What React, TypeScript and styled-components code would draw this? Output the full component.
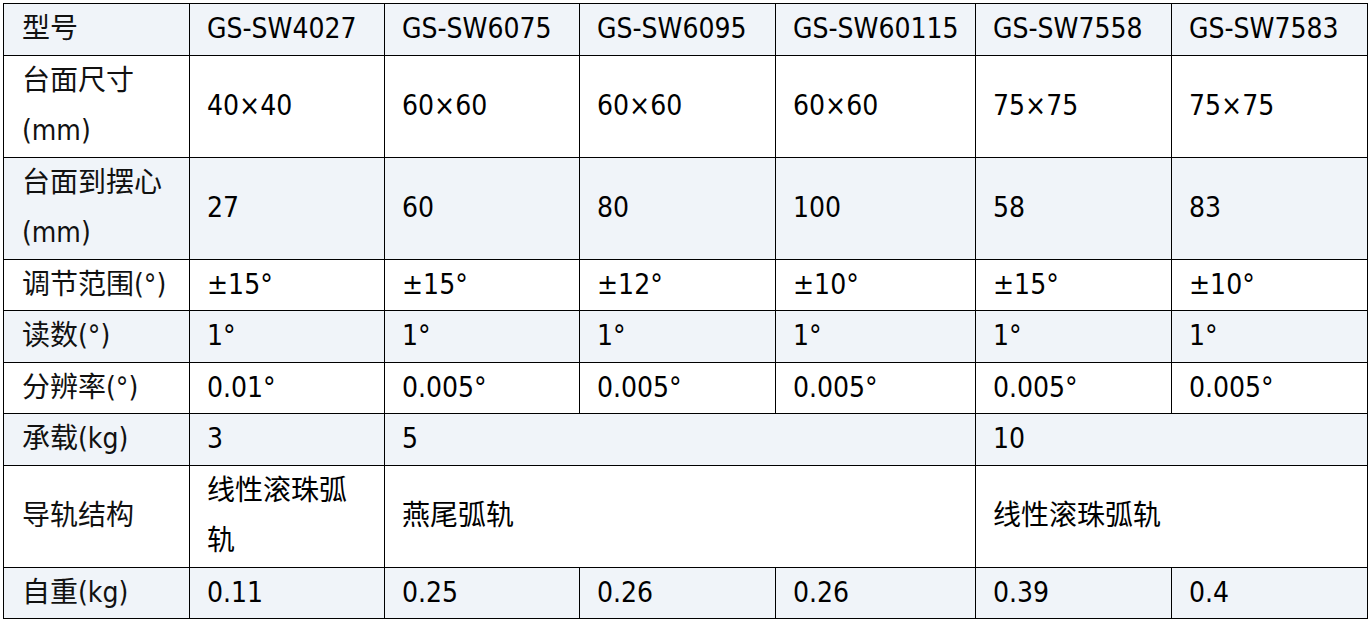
import styled, { createGlobalStyle } from 'styled-components';

const GlobalStyle = createGlobalStyle`
  html, body {
    margin: 0;
    padding: 0;
    background: #ffffff;
  }
  body {
    font-family: 'DejaVu Sans Condensed', 'DejaVu Sans', 'Noto Sans CJK SC', sans-serif;
    color: #000;
  }
`;

const widths = [186, 195, 195, 196, 200, 196, 196];

type Cell = { text: string; span?: number };
type Row = { label: string; cells: Cell[]; nowrap?: boolean };

const rows: Row[] = [
  {
    label: '型号',
    nowrap: true,
    cells: [
      { text: 'GS-SW4027' },
      { text: 'GS-SW6075' },
      { text: 'GS-SW6095' },
      { text: 'GS-SW60115' },
      { text: 'GS-SW7558' },
      { text: 'GS-SW7583' },
    ],
  },
  {
    label: '台面尺寸(mm)',
    cells: [
      { text: '40×40' },
      { text: '60×60' },
      { text: '60×60' },
      { text: '60×60' },
      { text: '75×75' },
      { text: '75×75' },
    ],
  },
  {
    label: '台面到摆心(mm)',
    cells: [
      { text: '27' },
      { text: '60' },
      { text: '80' },
      { text: '100' },
      { text: '58' },
      { text: '83' },
    ],
  },
  {
    label: '调节范围(°)',
    cells: [
      { text: '±15°' },
      { text: '±15°' },
      { text: '±12°' },
      { text: '±10°' },
      { text: '±15°' },
      { text: '±10°' },
    ],
  },
  {
    label: '读数(°)',
    cells: [
      { text: '1°' },
      { text: '1°' },
      { text: '1°' },
      { text: '1°' },
      { text: '1°' },
      { text: '1°' },
    ],
  },
  {
    label: '分辨率(°)',
    cells: [
      { text: '0.01°' },
      { text: '0.005°' },
      { text: '0.005°' },
      { text: '0.005°' },
      { text: '0.005°' },
      { text: '0.005°' },
    ],
  },
  {
    label: '承载(kg)',
    cells: [{ text: '3' }, { text: '5', span: 3 }, { text: '10', span: 2 }],
  },
  {
    label: '导轨结构',
    cells: [
      { text: '线性滚珠弧轨' },
      { text: '燕尾弧轨', span: 3 },
      { text: '线性滚珠弧轨', span: 2 },
    ],
  },
  {
    label: '自重(kg)',
    cells: [
      { text: '0.11' },
      { text: '0.25' },
      { text: '0.26' },
      { text: '0.26' },
      { text: '0.39' },
      { text: '0.4' },
    ],
  },
];

export default function App() {
  return (
    <>
      <GlobalStyle />
      <Page>
        <SpecTable>
          <colgroup>
            {widths.map((w, i) => (
              <col key={i} style={{ width: w }} />
            ))}
          </colgroup>
          <tbody>
            {rows.map((row, r) => (
              <SpecRow key={r} $shaded={r % 2 === 0}>
                <LabelCell>{row.label}</LabelCell>
                {row.cells.map((c, i) => (
                  <ValueCell key={i} colSpan={c.span ?? 1} $nowrap={!!row.nowrap}>
                    {c.text}
                  </ValueCell>
                ))}
              </SpecRow>
            ))}
          </tbody>
        </SpecTable>
      </Page>
    </>
  );
}

const Page = styled.div`
  padding: 3px;
`;

const SpecTable = styled.table`
  width: 1365px;
  table-layout: fixed;
  border-collapse: collapse;
  border: 1px solid #000;
  font-size: 28px;
  line-height: 50.5px;
`;

const SpecRow = styled.tr<{ $shaded: boolean }>`
  background: ${(p) => (p.$shaded ? '#f0f4f9' : '#ffffff')};
  height: 51px;
`;

const LabelCell = styled.td`
  border: 1px solid #000;
  padding: 0 14px 0 18px;
  vertical-align: middle;
  color: #111;
`;

const ValueCell = styled.td<{ $nowrap: boolean }>`
  border: 1px solid #000;
  padding: 0 17px;
  vertical-align: middle;
  color: #000;
  white-space: ${(p) => (p.$nowrap ? 'nowrap' : 'normal')};
`;
